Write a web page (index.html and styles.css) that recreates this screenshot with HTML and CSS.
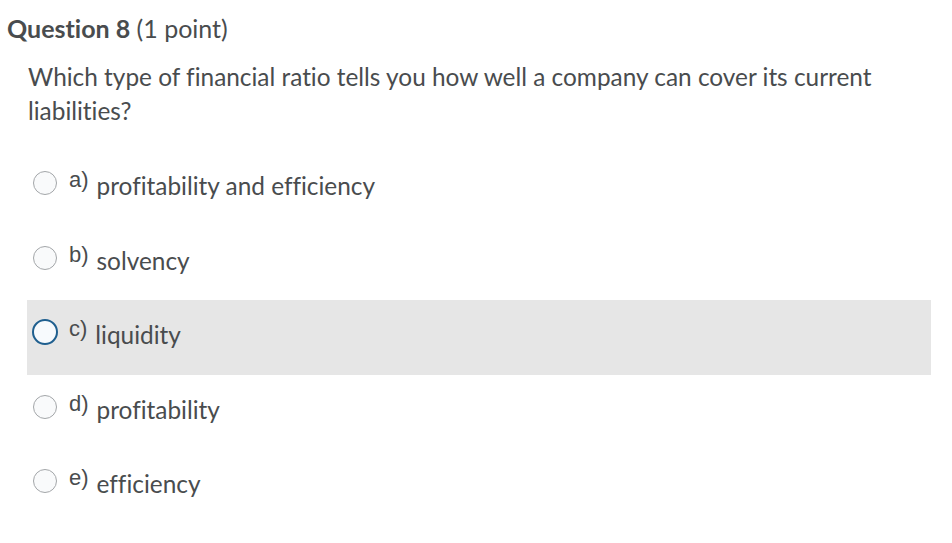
FILE: index.html
```html
<!DOCTYPE html>
<html>
<head>
<meta charset="utf-8">
<link rel="stylesheet" href="styles.css">
</head>
<body>
<div class="page">
  <h2 class="title"><strong>Question 8</strong> <span class="pts">(1 point)</span></h2>
  <p class="prompt">Which type of financial ratio tells you how well a company can cover its current liabilities?</p>
  <div class="options">
    <div class="opt"><span class="radio"></span><span class="letter">a)</span><span class="text">profitability and efficiency</span></div>
    <div class="opt"><span class="radio"></span><span class="letter">b)</span><span class="text">solvency</span></div>
    <div class="opt hover"><span class="radio focus"></span><span class="letter">c)</span><span class="text">liquidity</span></div>
    <div class="opt"><span class="radio"></span><span class="letter">d)</span><span class="text">profitability</span></div>
    <div class="opt"><span class="radio"></span><span class="letter">e)</span><span class="text">efficiency</span></div>
  </div>
</div>
</body>
</html>
```
FILE: styles.css
```css
html, body { margin: 0; padding: 0; background: #ffffff; }
body { font-family: Lato, "Open Sans", sans-serif; color: #494c4e; font-variant-ligatures: none; }
.page { width: 952px; height: 543px; overflow: hidden; }
.title { margin: 0; padding: 12px 0 0 7px; font-size: 25px; line-height: 32px; font-weight: 400; }
.title strong { font-weight: 700; }
.prompt { margin: 16px 0 0 28px; width: 880px; font-size: 24.4px; line-height: 34px; }
.options { margin: 23px 0 0 27px; width: 904px; }
.opt { height: 74.5px; display: flex; align-items: center; padding-left: 6px; box-sizing: border-box; }
.opt.hover { background: #e6e6e6; }
.radio { width: 24px; height: 24px; border: 1px solid #a3a6a9; border-radius: 50%; background: #f9fafb; box-sizing: border-box; flex: none; margin-top: -10px; }
.radio.focus { border: 2px solid #1f5f8f; background: #f7fafd; width: 26px; height: 26px; margin-left: -1px; margin-right: -1px; }
.letter { font-family: "Liberation Sans", Arial, sans-serif; font-size: 22px; margin-left: 12px; margin-top: -16px; }
.text { font-size: 24.4px; margin-left: 8px; margin-top: -5px; }
```
